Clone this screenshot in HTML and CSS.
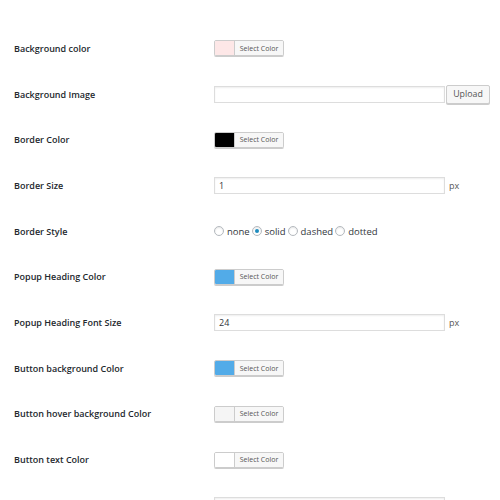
FILE: index.html
```html
<!DOCTYPE html>
<html>
<head>
<meta charset="utf-8">
<link rel="stylesheet" href="styles.css">
</head>
<body>
<div class="form">
  <div class="row">
    <div class="label">Background color</div>
    <div class="field"><span class="picker"><span class="swatch sw-pink"></span><span class="pick-btn">Select Color</span></span></div>
  </div>
  <div class="row">
    <div class="label">Background Image</div>
    <div class="field"><span class="input"></span><span class="button">Upload</span></div>
  </div>
  <div class="row">
    <div class="label">Border Color</div>
    <div class="field"><span class="picker"><span class="swatch sw-black"></span><span class="pick-btn">Select Color</span></span></div>
  </div>
  <div class="row">
    <div class="label">Border Size</div>
    <div class="field"><span class="input">1</span><span class="unit">px</span></div>
  </div>
  <div class="row">
    <div class="label">Border Style</div>
    <div class="field radios">
      <span class="radio"></span><span class="opt">none</span>
      <span class="radio checked"></span><span class="opt">solid</span>
      <span class="radio"></span><span class="opt">dashed</span>
      <span class="radio"></span><span class="opt">dotted</span>
    </div>
  </div>
  <div class="row">
    <div class="label">Popup Heading Color</div>
    <div class="field"><span class="picker"><span class="swatch sw-blue"></span><span class="pick-btn">Select Color</span></span></div>
  </div>
  <div class="row">
    <div class="label">Popup Heading Font Size</div>
    <div class="field"><span class="input">24</span><span class="unit">px</span></div>
  </div>
  <div class="row">
    <div class="label">Button background Color</div>
    <div class="field"><span class="picker"><span class="swatch sw-blue"></span><span class="pick-btn">Select Color</span></span></div>
  </div>
  <div class="row">
    <div class="label">Button hover background Color</div>
    <div class="field"><span class="picker"><span class="swatch sw-gray"></span><span class="pick-btn">Select Color</span></span></div>
  </div>
  <div class="row">
    <div class="label">Button text Color</div>
    <div class="field"><span class="picker"><span class="swatch sw-white"></span><span class="pick-btn">Select Color</span></span></div>
  </div>
  <div class="row">
    <div class="label"></div>
    <div class="field"><span class="input"></span></div>
  </div>
</div>
</body>
</html>
```
FILE: styles.css
```css
html, body {
  margin: 0;
  padding: 0;
  background: #fff;
  overflow: hidden;
}
body {
  font-family: "Open Sans", "Noto Sans", sans-serif;
  color: #23282d;
}
.form {
  padding: 25.6px 0 0 14px;
  display: flex;
  flex-direction: column;
}
.row {
  height: 45.7px;
  display: flex;
  align-items: center;
}
.label {
  width: 200px;
  font-size: 9px;
  font-weight: 600;
  color: #23282d;
}
.field {
  display: flex;
  align-items: center;
  font-size: 9px;
  color: #32373c;
}
.picker {
  display: inline-flex;
  height: 16px;
  box-sizing: border-box;
  border: 1px solid #ccc;
  border-radius: 2px;
  box-shadow: 0 1px 0 #ccc;
  overflow: hidden;
}
.swatch {
  width: 19px;
  height: 100%;
}
.sw-pink { background: #fde7e7; }
.sw-black { background: #000; }
.sw-blue { background: #52abe8; }
.sw-gray { background: #f5f5f5; }
.sw-white { background: #fff; }
.pick-btn {
  width: 48px;
  border-left: 1px solid #ccc;
  background: #f7f7f7;
  color: #555;
  font-size: 7px;
  display: flex;
  align-items: center;
  justify-content: center;
}
.input {
  width: 231px;
  height: 17px;
  box-sizing: border-box;
  border: 1px solid #ddd;
  box-shadow: inset 0 1px 2px rgba(0,0,0,0.07);
  background: #fff;
  padding-left: 4px;
  display: flex;
  align-items: center;
  font-size: 9px;
  color: #32373c;
}
.button {
  margin-left: 1px;
  width: 44px;
  height: 19px;
  box-sizing: border-box;
  border: 1px solid #ccc;
  border-radius: 2px;
  background: #f7f7f7;
  box-shadow: 0 1px 0 #ccc;
  color: #555;
  font-size: 8.8px;
  display: flex;
  align-items: center;
  justify-content: center;
}
.unit {
  margin-left: 4px;
  color: #555;
  font-size: 9px;
}
.radios {
  color: #32373c;
  font-size: 9.5px;
}
.radio {
  width: 10px;
  height: 10px;
  box-sizing: border-box;
  border: 1px solid #b4b9be;
  border-radius: 50%;
  background: #fff;
  box-shadow: inset 0 1px 2px rgba(0,0,0,0.1);
  margin-right: 3px;
  display: flex;
  align-items: center;
  justify-content: center;
}
.radio.checked::after {
  content: "";
  width: 4px;
  height: 4px;
  border-radius: 50%;
  background: #1e8cbe;
}
.opt {
  margin-right: 2px;
}
```
